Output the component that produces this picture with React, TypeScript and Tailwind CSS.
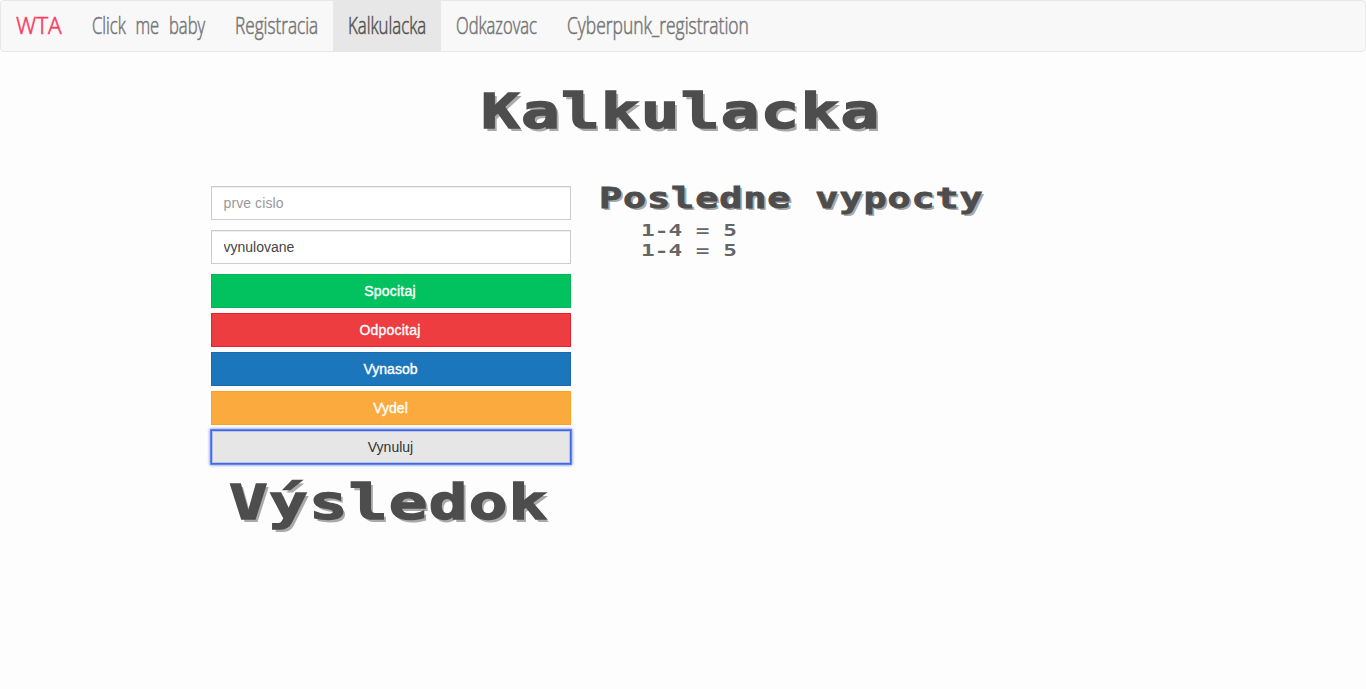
import React from 'react';

const links = [
  { label: 'WTA', box: 'w-[76px] text-[#ff3860]', glyphs: 'scale-x-[0.94]' },
  { label: 'Click me baby', box: 'w-[143px] text-[#777]', glyphs: 'scale-x-[0.69] [word-spacing:8px]' },
  { label: 'Registracia', box: 'w-[113px] text-[#777]', glyphs: 'scale-x-[0.716]' },
  { label: 'Kalkulacka', box: 'w-[108px] bg-[#e7e7e7] text-[#555]', glyphs: 'scale-x-[0.70]' },
  { label: 'Odkazovac', box: 'w-[111px] text-[#777]', glyphs: 'scale-x-[0.69]' },
  { label: 'Cyberpunk_registration', box: 'w-[212px] text-[#777]', glyphs: 'scale-x-[0.727]' },
];

const buttons = [
  { label: 'Spocitaj', style: 'pr-[8px] border-[#00b956] bg-[#02c260] text-white tracking-[0.2px] [-webkit-text-stroke:0.35px]' },
  { label: 'Odpocitaj', style: 'pr-[8px] border-[#e8202a] bg-[#ed3d41] text-white tracking-[0.2px] [-webkit-text-stroke:0.35px]' },
  { label: 'Vynasob', style: 'pr-[7px] border-[#1a69a8] bg-[#1c76bb] text-white [-webkit-text-stroke:0.35px]' },
  { label: 'Vydel', style: 'pr-[7px] border-[#fba01f] bg-[#fbab3d] text-white [-webkit-text-stroke:0.35px]' },
  {
    label: 'Vynuluj',
    style:
      'pr-[7px] border-[#4468df] bg-[#e6e6e6] text-[#333] shadow-[0_0_0_1px_#6584ea,0_0_3px_1px_#5c80f4,inset_0_0_0_1px_#b9c4e8]',
  },
];

const pixel = "font-['DejaVu_Sans_Mono',monospace] whitespace-pre origin-left";
const title =
  'scale-x-[1.354] text-[47.5px] tracking-[0.9px] leading-[64px] font-bold text-[#4d4d4d] [-webkit-text-stroke:1.4px_#4d4d4d] [text-shadow:2px_2.5px_0_#aaa]';

export default function App() {
  return (
    <div className="h-[689px] overflow-hidden bg-[#fdfdfd] font-['Liberation_Sans',Arial,sans-serif] text-sm leading-5 text-[#555]">
      <nav className="flex h-[52px] rounded border border-[#e7e7e7] bg-[#f8f8f8]">
        {links.map((link) => (
          <a key={link.label} className={`flex h-[50px] shrink-0 items-center pl-[15px] ${link.box}`}>
            <span
              className={`-mt-[2px] block origin-left font-['Open_Sans',sans-serif] text-[24px] leading-[48px] font-light whitespace-nowrap [-webkit-text-stroke:0.6px] ${link.glyphs}`}
            >
              {link.label}
            </span>
          </a>
        ))}
      </nav>

      <header className="flex h-[134px] pt-[28px] pl-[481px]">
        <h1 className={`${pixel} h-[64px] ${title}`}>Kalkulacka</h1>
      </header>

      <main className="flex pl-[211px]">
        <form className="flex w-[360px] flex-col" onSubmit={(e) => e.preventDefault()}>
          <input
            className="mb-[10px] h-[34px] border border-[#ccc] bg-white px-[11.5px] text-sm tracking-[0.1px] text-[#555] shadow-[inset_0_1px_1px_rgba(0,0,0,0.075)] placeholder:text-[#999]"
            placeholder="prve cislo"
          />
          <input
            className="mb-[10px] h-[34px] border border-[#ccc] bg-white px-[11.5px] text-sm text-[#444] shadow-[inset_0_1px_1px_rgba(0,0,0,0.075)]"
            defaultValue="vynulovane"
          />
          <div className="flex flex-col gap-[5px]">
            {buttons.map((button) => (
              <button key={button.label} type="button" className={`h-[34px] border pl-[6px] text-center ${button.style}`}>
                {button.label}
              </button>
            ))}
          </div>
          <h1 className={`${pixel} mt-[7px] ml-[18px] ${title}`}>Výsledok</h1>
        </form>

        <section className="pl-[28px]">
          <h2
            className={`${pixel} h-[35px] scale-x-[1.35] text-[28.5px] leading-[25px] font-bold tracking-[0.65px] text-[#4d4d4d] [-webkit-text-stroke:0.8px_#4d4d4d] [text-shadow:1.75px_2px_0_#aaa]`}
          >
            Posledne vypocty
          </h2>
          <ul className="pl-[42px] text-[16.5px] leading-5 text-[#666]">
            <li className={`${pixel} scale-x-[1.38] font-bold`}>1-4 = 5</li>
            <li className={`${pixel} scale-x-[1.38] font-bold`}>1-4 = 5</li>
          </ul>
        </section>
      </main>
    </div>
  );
}
